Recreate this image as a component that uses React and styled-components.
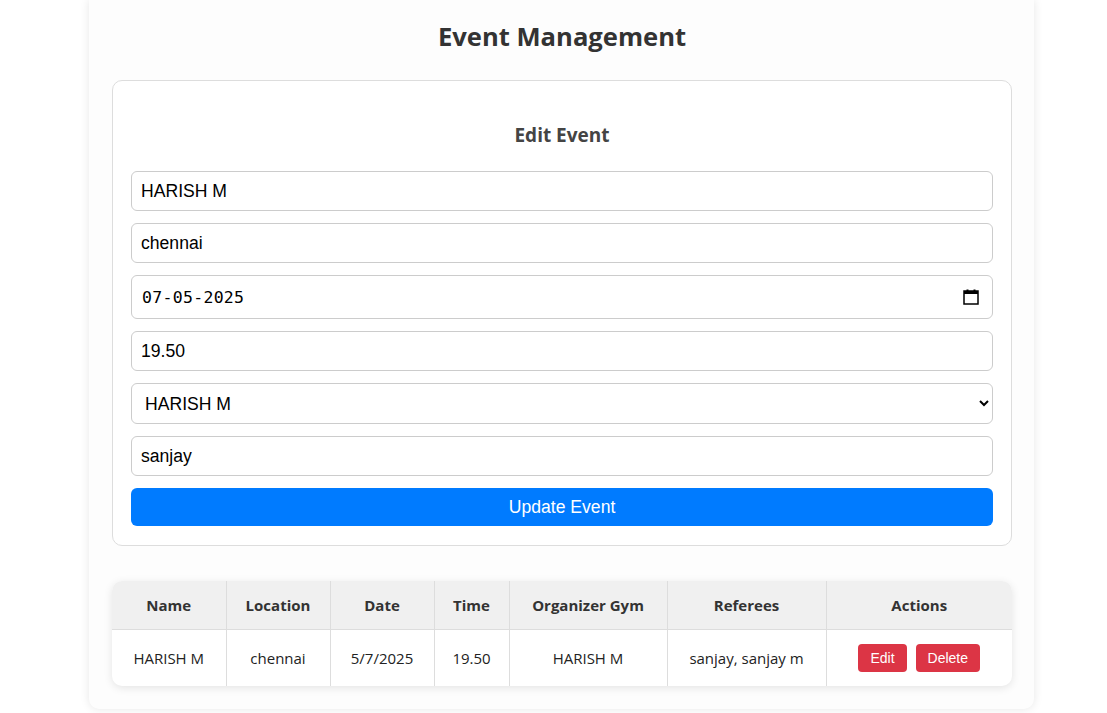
import React, { useState } from "react";
import styled, { createGlobalStyle } from "styled-components";

const GlobalStyle = createGlobalStyle`
  html, body {
    margin: 0;
    padding: 0;
    background: #ffffff;
    font-family: "Open Sans", "Noto Sans", sans-serif;
    overflow: hidden;
  }
`;

const Page = styled.div`
  min-height: 713px;
  padding-left: 16px;
  display: flex;
  justify-content: center;
  align-items: flex-start;
`;

const Card = styled.div`
  width: 945px;
  box-sizing: border-box;
  background: #fdfdfd;
  padding: 18px 22px 23px 23px;
  border-radius: 0 0 10px 10px;
  box-shadow: 0 0 10px rgba(0, 0, 0, 0.1);
`;

const Title = styled.h2`
  margin: 0 0 24px;
  text-align: center;
  font-size: 25.6px;
  line-height: 38px;
  font-weight: 700;
  color: #333;
`;

const FormCard = styled.form`
  background: #fff;
  border: 1px solid #ddd;
  border-radius: 10px;
  padding: 0 18px 19px;
  display: flex;
  flex-direction: column;
  gap: 12px;
`;

const FormTitle = styled.h3`
  margin: 41px 0 10px;
  text-align: center;
  font-size: 19px;
  line-height: 27px;
  font-weight: 700;
  color: #444;
`;

const Input = styled.input`
  box-sizing: border-box;
  width: 100%;
  height: 40px;
  padding: 0 9px;
  border: 1px solid #ccc;
  border-radius: 6px;
  font-family: "Liberation Sans", Arial, sans-serif;
  font-size: 17.6px;
  color: #000;
  background: #fff;
  outline: none;
`;

const DateField = styled.label`
  box-sizing: border-box;
  height: 44px;
  display: flex;
  align-items: center;
  padding: 0 13px 0 10px;
  border: 1px solid #ccc;
  border-radius: 6px;
  background: #fff;
`;

const DateText = styled.input`
  flex: 1;
  border: none;
  outline: none;
  padding: 0;
  background: transparent;
  font-family: "DejaVu Sans Mono", "Liberation Mono", monospace;
  font-size: 16.5px;
  letter-spacing: 0.3px;
  color: #000;
`;

const Select = styled.select`
  box-sizing: border-box;
  width: 100%;
  height: 41px;
  padding: 0 8px 0 9px;
  border: 1px solid #ccc;
  border-radius: 6px;
  font-family: "Liberation Sans", Arial, sans-serif;
  font-size: 17.6px;
  color: #000;
  background: #fff;
  outline: none;
`;

const SubmitButton = styled.button`
  height: 38px;
  border: none;
  border-radius: 6px;
  background: #007bff;
  color: #fff;
  font-family: "Liberation Sans", Arial, sans-serif;
  font-size: 17.6px;
  cursor: pointer;
`;

const TableWrap = styled.div`
  margin-top: 35px;
  border-radius: 10px;
  overflow: hidden;
  background: #fff;
  box-shadow: 0 2px 8px rgba(0, 0, 0, 0.1);
`;

const Table = styled.table`
  width: 100%;
  border-collapse: collapse;
  table-layout: fixed;
`;

const Th = styled.th`
  height: 48px;
  padding: 0 8px;
  background: #f0f0f0;
  color: #333;
  font-size: 15px;
  font-weight: 700;
  text-align: center;
  border-right: 1px solid #ddd;
  border-bottom: 1px solid #ddd;
  &:last-child {
    border-right: none;
  }
`;

const Td = styled.td`
  height: 56px;
  padding: 0 8px;
  color: #222;
  font-size: 15px;
  text-align: center;
  border-right: 1px solid #ddd;
  &:last-child {
    border-right: none;
  }
`;

const SmallButton = styled.button`
  height: 28px;
  padding: 0 12px;
  margin: 0 4.5px;
  border: none;
  border-radius: 4px;
  background: #dc3545;
  color: #fff;
  font-family: "Liberation Sans", Arial, sans-serif;
  font-size: 14px;
  cursor: pointer;
`;

const CalendarIcon = () => (
  <svg width="16" height="16" viewBox="0 0 16 16" fill="none">
    <rect x="1" y="2" width="14" height="13" stroke="#000" strokeWidth="1.5" />
    <rect x="1" y="2" width="14" height="3" fill="#000" />
    <rect x="3.5" y="0.5" width="2" height="2" fill="#000" />
    <rect x="10.5" y="0.5" width="2" height="2" fill="#000" />
  </svg>
);

const columns = [
  ["Name", 114],
  ["Location", 104],
  ["Date", 104],
  ["Time", 75],
  ["Organizer Gym", 158],
  ["Referees", 159],
  ["Actions", 186],
];

export default function App() {
  const [form, setForm] = useState({
    name: "HARISH M",
    location: "chennai",
    date: "07-05-2025",
    time: "19.50",
    gym: "HARISH M",
    referees: "sanjay",
  });

  const set = (key) => (e) => setForm({ ...form, [key]: e.target.value });

  return (
    <>
      <GlobalStyle />
      <Page>
        <Card>
          <Title>Event Management</Title>
          <FormCard onSubmit={(e) => e.preventDefault()}>
            <FormTitle>Edit Event</FormTitle>
            <Input value={form.name} onChange={set("name")} />
            <Input value={form.location} onChange={set("location")} />
            <DateField>
              <DateText value={form.date} onChange={set("date")} />
              <CalendarIcon />
            </DateField>
            <Input value={form.time} onChange={set("time")} />
            <Select value={form.gym} onChange={set("gym")}>
              <option>HARISH M</option>
            </Select>
            <Input value={form.referees} onChange={set("referees")} />
            <SubmitButton type="submit">Update Event</SubmitButton>
          </FormCard>

          <TableWrap>
            <Table>
              <colgroup>
                {columns.map(([name, w]) => (
                  <col key={name} style={{ width: w }} />
                ))}
              </colgroup>
              <thead>
                <tr>
                  {columns.map(([name]) => (
                    <Th key={name}>{name}</Th>
                  ))}
                </tr>
              </thead>
              <tbody>
                <tr>
                  <Td>HARISH M</Td>
                  <Td>chennai</Td>
                  <Td>5/7/2025</Td>
                  <Td>19.50</Td>
                  <Td>HARISH M</Td>
                  <Td>sanjay, sanjay m</Td>
                  <Td>
                    <SmallButton>Edit</SmallButton>
                    <SmallButton>Delete</SmallButton>
                  </Td>
                </tr>
              </tbody>
            </Table>
          </TableWrap>
        </Card>
      </Page>
    </>
  );
}
